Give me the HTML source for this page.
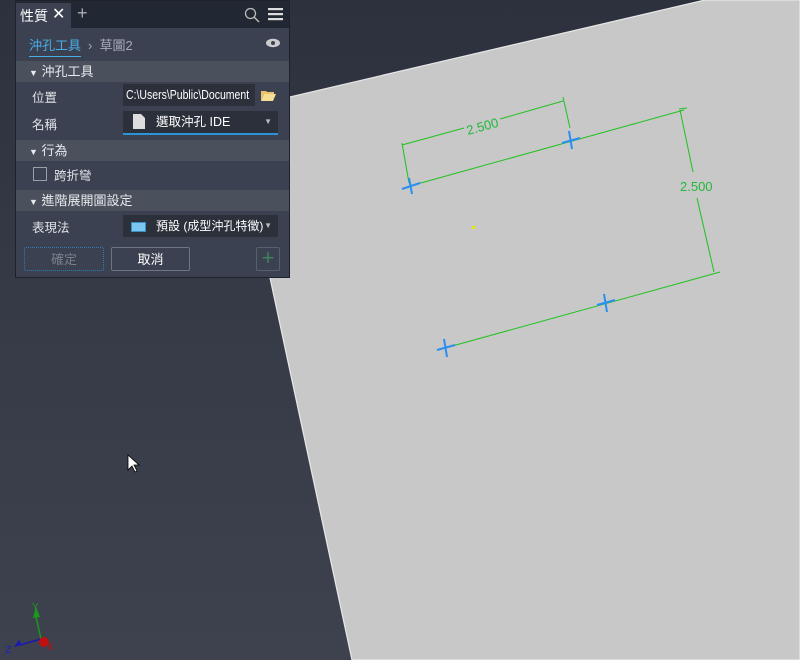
<!DOCTYPE html>
<html><head><meta charset="utf-8"><style>
body{margin:0;width:800px;height:660px;overflow:hidden;position:relative;font-family:"Liberation Sans","Noto Sans CJK TC",sans-serif;background:linear-gradient(180deg,#2c313d 0%,#363b47 50%,#3d424e 100%);}
#p{position:absolute;left:15px;top:0;width:275px;height:278px;background:#3b4150;border:1px solid #1e222a;box-sizing:border-box;color:#e0e3e8;font-size:12.5px}
.tabbar{height:27px;background:#222833;position:relative}
.tab{position:absolute;left:0;top:2px;width:55px;height:25px;background:#3b4150;font-size:14px;color:#fff}
.row{position:absolute;left:0;width:273px}
.sec{background:#4a505c;height:21px;line-height:21px;font-size:13px;color:#e8eaee}
.fld{position:absolute;left:107px;width:155px;height:22px;background:#2b303a;line-height:22px;font-size:12.5px;color:#fff}
.btn{position:absolute;top:246px;height:24px;line-height:24px;text-align:center;border:1px solid #6e7480;border-radius:2px;font-size:13px;box-sizing:border-box}
</style></head><body>
<svg width="800" height="660" style="position:absolute;left:0;top:0">
<polygon points="234,110 705,0 800,0 800,660 352,660" fill="#c8c8c8" stroke="#e8e8e8" stroke-width="1.2"/>
<g stroke="#1ec21e" stroke-width="1" fill="none">
<line x1="410" y1="186" x2="684" y2="110"/>
<line x1="445" y1="348" x2="720" y2="272"/>
<line x1="402" y1="143" x2="409" y2="183"/>
<line x1="563" y1="97" x2="570" y2="128"/>
<line x1="402" y1="145" x2="464" y2="128"/>
<line x1="500" y1="119" x2="563" y2="101"/>
<line x1="679" y1="109" x2="687" y2="108"/>
<line x1="680" y1="110" x2="693" y2="172"/>
<line x1="697" y1="198" x2="714" y2="272"/>
</g>
<g fill="#22b83a" font-size="13" font-family="Liberation Sans">
<text x="466" y="131" transform="rotate(-15 482 126)">2.500</text>
<text x="680" y="191">2.500</text>
</g>
<g stroke="#2a8ff0" stroke-width="2">
<line x1="402" y1="189" x2="420" y2="183"/><line x1="409" y1="178" x2="412" y2="194"/>
<line x1="562" y1="143" x2="580" y2="138"/><line x1="569" y1="131" x2="572" y2="149"/>
<line x1="597" y1="305" x2="615" y2="300"/><line x1="604" y1="294" x2="607" y2="312"/>
<line x1="437" y1="350" x2="455" y2="345"/><line x1="444" y1="339" x2="447" y2="357"/>
</g>
<rect x="472" y="226" width="3" height="3" fill="#e8e800"/>
<path d="M128 455 L128 470 L132 466 L135 472 L137 471 L134 465 L139 465 Z" fill="#fff" stroke="#000" stroke-width="0.8"/>
<g stroke-width="1.5"><line x1="41" y1="639" x2="36" y2="617" stroke="#1a9a1a"/><line x1="41" y1="639" x2="20" y2="645" stroke="#1a1ab0"/></g>
<polygon points="33,618 36,607 40,617" fill="#1a9a1a"/><polygon points="22,645 19,640 14,647" fill="#1a1ab0"/>
<circle cx="44" cy="642" r="5" fill="#c01010"/>
<text x="32" y="610" fill="#1a9a1a" font-size="10">Y</text><text x="5" y="653" fill="#2020c0" font-size="10">Z</text><text x="47" y="650" fill="#c01010" font-size="10">X</text>
</svg>
<div id="p">
<div class="tabbar"><div class="tab"><span style="position:absolute;left:4px;top:3px">性質</span><span style="position:absolute;left:36px;top:1px;font-size:16px">✕</span></div>
<span style="position:absolute;left:61px;top:2px;font-size:18px;color:#aab">+</span>
<svg style="position:absolute;left:228px;top:6px" width="16" height="16"><circle cx="6.5" cy="6.5" r="5" stroke="#bbb" stroke-width="1.3" fill="none"/><line x1="10" y1="10" x2="15" y2="15" stroke="#bbb" stroke-width="1.4"/></svg>
<svg style="position:absolute;left:252px;top:7px" width="15" height="13"><rect y="0" width="15" height="2.2" fill="#ddd"/><rect y="5" width="15" height="2.2" fill="#ddd"/><rect y="10" width="15" height="2.2" fill="#ddd"/></svg></div>
<div class="row" style="top:27px;height:31px">
<span style="position:absolute;left:13px;top:7px;color:#49aee8;font-size:13px;border-bottom:1px solid #49aee8;padding-bottom:2px">沖孔工具</span>
<span style="position:absolute;left:72px;top:7px;color:#aab;font-size:13px">›&nbsp; 草圖2</span>
<svg style="position:absolute;left:250px;top:10px" width="14" height="10"><ellipse cx="7" cy="5" rx="7" ry="4.2" fill="#ccc"/><circle cx="7" cy="5" r="2" fill="#3b4150"/></svg></div>
<div class="row sec" style="top:60px"><span style="margin-left:13px;font-size:9px">▼</span> 沖孔工具</div>
<div class="row" style="top:83px;height:24px"><span style="position:absolute;left:16px;top:3px">位置</span>
<div class="fld" style="top:0;width:132px;overflow:hidden;white-space:nowrap"><span style="display:inline-block;transform:scaleX(0.84);transform-origin:0 50%;margin-left:3px">C:\Users\Public\Document</span></div>
<svg style="position:absolute;left:244px;top:4px" width="17" height="14"><path d="M1 3h5l1 1h7v2H4L1 13z" fill="#e8c56a"/><path d="M4 6h12l-3 7H1z" fill="#f5dd94"/></svg></div>
<div class="row" style="top:109px;height:24px"><span style="position:absolute;left:16px;top:4px">名稱</span>
<div class="fld" style="top:1px;border-bottom:2px solid #2c93d6"><svg style="position:absolute;left:10px;top:3px" width="12" height="15"><path d="M0 0h8l4 4v11H0z" fill="#ddd"/></svg><span style="position:absolute;left:33px">選取沖孔 IDE</span><span style="position:absolute;right:6px;font-size:8px;color:#bbb">▼</span></div></div>
<div class="row sec" style="top:139px"><span style="margin-left:13px;font-size:9px">▼</span> 行為</div>
<div class="row" style="top:161px;height:24px"><span style="position:absolute;left:17px;top:5px;width:12px;height:12px;border:1px solid #9aa0aa"></span><span style="position:absolute;left:38px;top:3px">跨折彎</span></div>
<div class="row sec" style="top:189px"><span style="margin-left:13px;font-size:9px">▼</span> 進階展開圖設定</div>
<div class="row" style="top:213px;height:24px"><span style="position:absolute;left:16px;top:3px">表現法</span>
<div class="fld" style="top:1px"><span style="position:absolute;left:8px;top:7px;width:13px;height:8px;background:#7ac6ee;border:1px solid #3a8fc0"></span><span style="position:absolute;left:33px;font-size:12px">預設 (成型沖孔特徵)</span><span style="position:absolute;right:6px;font-size:8px;color:#bbb">▼</span></div></div>
<div class="btn" style="left:8px;width:80px;color:#7a8088;border:1px dotted #2d7fb0">確定</div>
<div class="btn" style="left:95px;width:79px;color:#fff">取消</div>
<div class="btn" style="left:240px;width:24px;border-color:#5a606a;color:#3f7f5a;font-size:22px;line-height:20px">+</div>
</div>
</body></html>
